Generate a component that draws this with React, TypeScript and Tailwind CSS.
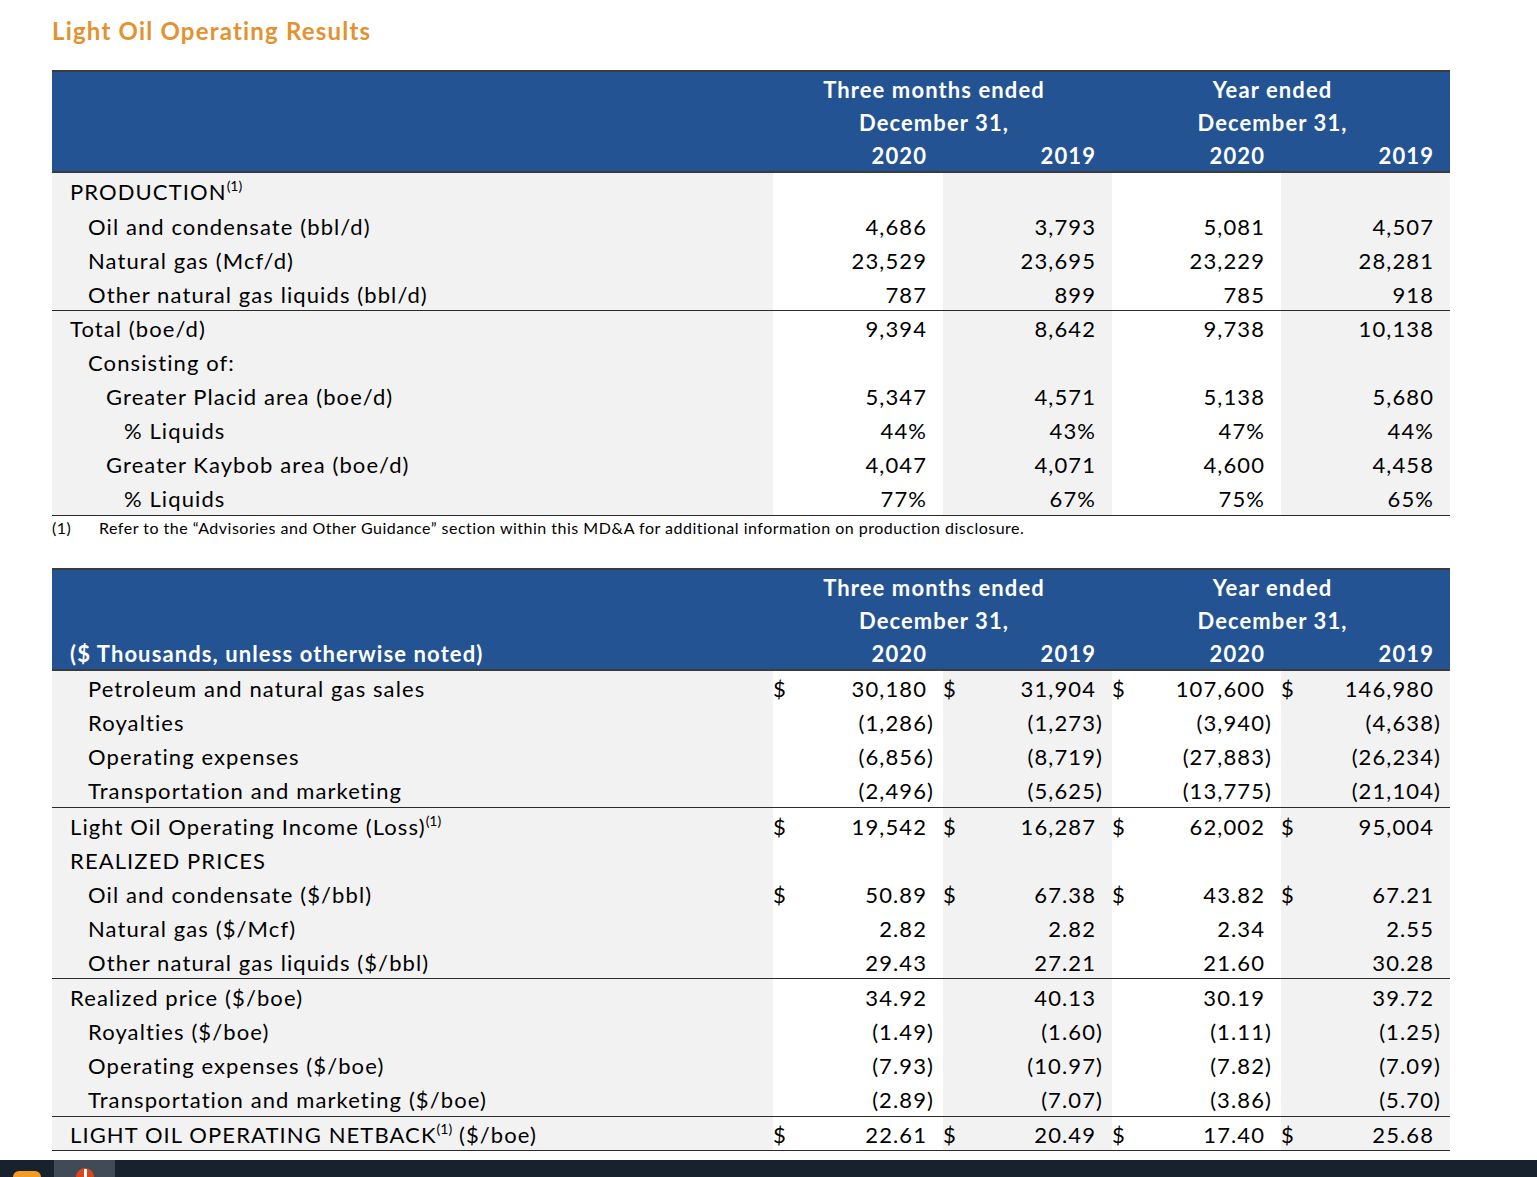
import type { ReactNode } from "react";

type Row = {
  label: ReactNode;
  indent: number;
  vals?: string[];
  dollar?: boolean;
  line?: boolean;
  tall?: boolean;
};

const production: Row[] = [
  { label: <>PRODUCTION<Sup /></>, indent: 0, tall: true },
  { label: "Oil and condensate (bbl/d)", indent: 1, vals: ["4,686", "3,793", "5,081", "4,507"], tall: true },
  { label: "Natural gas (Mcf/d)", indent: 1, vals: ["23,529", "23,695", "23,229", "28,281"] },
  { label: "Other natural gas liquids (bbl/d)", indent: 1, vals: ["787", "899", "785", "918"], line: true },
  { label: "Total (boe/d)", indent: 0, vals: ["9,394", "8,642", "9,738", "10,138"] },
  { label: "Consisting of:", indent: 1 },
  { label: "Greater Placid area (boe/d)", indent: 2, vals: ["5,347", "4,571", "5,138", "5,680"] },
  { label: "% Liquids", indent: 3, vals: ["44%", "43%", "47%", "44%"] },
  { label: "Greater Kaybob area (boe/d)", indent: 2, vals: ["4,047", "4,071", "4,600", "4,458"] },
  { label: "% Liquids", indent: 3, vals: ["77%", "67%", "75%", "65%"], line: true, tall: true },
];

const results: Row[] = [
  { label: "Petroleum and natural gas sales", indent: 1, dollar: true, vals: ["30,180", "31,904", "107,600", "146,980"] },
  { label: "Royalties", indent: 1, vals: ["(1,286)", "(1,273)", "(3,940)", "(4,638)"] },
  { label: "Operating expenses", indent: 1, vals: ["(6,856)", "(8,719)", "(27,883)", "(26,234)"] },
  { label: "Transportation and marketing", indent: 1, vals: ["(2,496)", "(5,625)", "(13,775)", "(21,104)"], line: true, tall: true },
  { label: <>Light Oil Operating Income (Loss)<Sup /></>, indent: 0, dollar: true, vals: ["19,542", "16,287", "62,002", "95,004"], tall: true },
  { label: "REALIZED PRICES", indent: 0 },
  { label: "Oil and condensate ($/bbl)", indent: 1, dollar: true, vals: ["50.89", "67.38", "43.82", "67.21"] },
  { label: "Natural gas ($/Mcf)", indent: 1, vals: ["2.82", "2.82", "2.34", "2.55"] },
  { label: "Other natural gas liquids ($/bbl)", indent: 1, vals: ["29.43", "27.21", "21.60", "30.28"], line: true },
  { label: "Realized price ($/boe)", indent: 0, vals: ["34.92", "40.13", "30.19", "39.72"], tall: true },
  { label: "Royalties ($/boe)", indent: 1, vals: ["(1.49)", "(1.60)", "(1.11)", "(1.25)"] },
  { label: "Operating expenses ($/boe)", indent: 1, vals: ["(7.93)", "(10.97)", "(7.82)", "(7.09)"] },
  { label: "Transportation and marketing ($/boe)", indent: 1, vals: ["(2.89)", "(7.07)", "(3.86)", "(5.70)"], line: true, tall: true },
  { label: <>LIGHT OIL OPERATING NETBACK<Sup /> ($/boe)</>, indent: 0, dollar: true, vals: ["22.61", "20.49", "17.40", "25.68"], line: true },
];

const grid = "grid grid-cols-[721px_170px_169px_169px_169px]";
const indents = ["pl-[18px]", "pl-[36px]", "pl-[54px]", "pl-[72px]"];
const colBg = ["bg-white", "bg-[#f2f2f2]", "bg-white", "bg-[#f2f2f2]"];

function Sup() {
  return <sup className="text-[14px] top-[-0.6em] tracking-normal">(1)</sup>;
}

function Num({ v }: { v: string }) {
  const neg = v.startsWith("(");
  return (
    <span className="flex">
      <span>{neg ? v.slice(0, -1) : v}</span>
      <span className="w-[10px]">{neg ? ")" : ""}</span>
    </span>
  );
}

function Header({ caption }: { caption?: string }) {
  const row = `${grid} h-[33px] pt-[3px] items-center leading-[26px] overflow-hidden`;
  return (
    <div className="bg-[#245394] text-white font-bold border-t-2 border-b-2 border-[#3b3b3b]">
      <div className={row}>
        <div />
        <div className="col-span-2 text-center pr-[17px]">Three months ended</div>
        <div className="col-span-2 text-center pr-[17px]">Year ended</div>
      </div>
      <div className={row}>
        <div />
        <div className="col-span-2 text-center pr-[17px]">December 31,</div>
        <div className="col-span-2 text-center pr-[17px]">December 31,</div>
      </div>
      <div className={row}>
        <div className="pl-[18px]">{caption}</div>
        {["2020", "2019", "2020", "2019"].map((y, i) => (
          <div key={i} className="text-right pr-[16px]">{y}</div>
        ))}
      </div>
    </div>
  );
}

function Body({ rows }: { rows: Row[] }) {
  return (
    <div>
      {rows.map((r, i) => (
        <div
          key={i}
          className={`${grid} leading-[26px] ${r.tall ? "h-[35px]" : "h-[34px]"} ${r.line ? "border-b border-[#2b2b2b]" : ""}`}
        >
          <div className={`bg-[#f2f2f2] flex items-center pt-[2px] whitespace-nowrap ${indents[r.indent]}`}>
            <span>{r.label}</span>
          </div>
          {[0, 1, 2, 3].map((c) => (
            <div key={c} className={`${colBg[c]} flex items-center justify-between pt-[2px] pr-[6px]`}>
              <span>{r.dollar ? "$" : ""}</span>
              {r.vals ? <Num v={r.vals[c]} /> : null}
            </div>
          ))}
        </div>
      ))}
    </div>
  );
}

export default function App() {
  return (
    <div className="min-h-[1177px] bg-white flex flex-col font-['Lato',sans-serif] text-[22px] tracking-[1.1px] text-black">
      <div className="pl-[52px] pr-[87px] flex-1">
        <h1 className="text-[24px] font-bold tracking-[1.2px] text-[#e3922f] h-[70px] pt-[14px] leading-[34px]">
          Light Oil Operating Results
        </h1>
        <Header />
        <Body rows={production} />
        <div className="flex text-[16px] tracking-[0.5px] h-[24px] items-center leading-[20px]">
          <span className="w-[47px]">(1)</span>
          <span>
            Refer to the “Advisories and Other Guidance” section within this MD&amp;A for additional
            information on production disclosure.
          </span>
        </div>
        <div className="h-[28px]" />
        <Header caption="($ Thousands, unless otherwise noted)" />
        <Body rows={results} />
      </div>
      <div className="h-[17px] bg-[#18222f] flex items-end mt-[9px]">
        <div className="w-[54px] h-full flex items-end justify-center">
          <div className="w-[28px] h-[6px] rounded-t-[8px] bg-[#f59a23]" />
        </div>
        <div className="w-[61px] h-full bg-[#414a57] flex items-end justify-center">
          <div className="w-[18px] h-[9px] rounded-t-full bg-[#d9481c] relative">
            <div className="absolute left-[8px] top-[1px] w-[3px] h-[8px] bg-white" />
          </div>
        </div>
      </div>
    </div>
  );
}
